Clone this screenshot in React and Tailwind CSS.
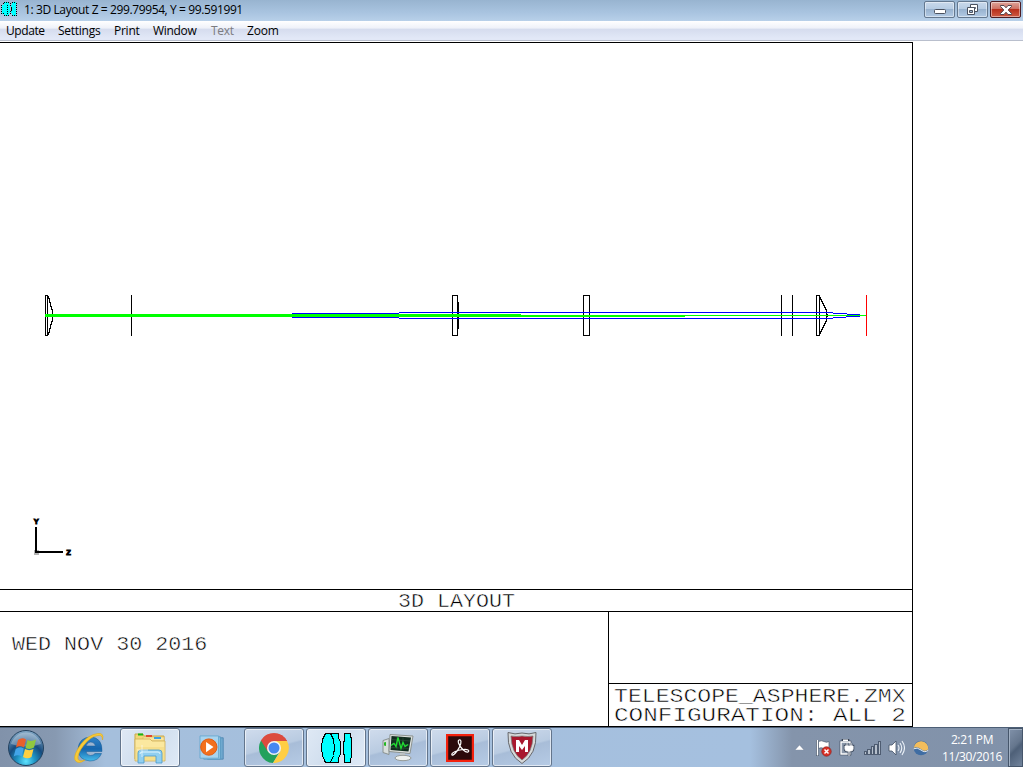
import React from "react";

const line = { fill: "none", stroke: "#000", strokeWidth: 1 };

function LensLogo({ className }) {
  return (
    <svg className={className} viewBox="0 0 32 32" preserveAspectRatio="none" shapeRendering="crispEdges">
      <g fill="#00ffff" stroke="#000" strokeWidth="1">
        <path d="M10.500 1.500h8v4l2 5v11l-2 5v4h-8z" />
        <path d="M5.500 1.500h5l3 6 1 8-1 8-3 7h-5l-3-7-1-8 1-8z" />
        <path d="M24.500 1.500h6l1 8v13l-1 8h-6v-6l-1-4v-9l1-4z" />
      </g>
    </svg>
  );
}

function SmallLensLogo() {
  return (
    <svg className="mt-[-2px] ml-[1px] h-4 w-4" viewBox="0 0 16 16" shapeRendering="crispEdges">
      <path fill="#00ffff" d="M3 1h5v3h1v8H8v3H3v-2H1V4h2zM11 1h4v14h-4v-3h-1V4h1z" />
      <path fill="none" stroke="#000" strokeDasharray="1 1" d="M3 1.500h6M.5 4v9M3 14.500h6M2.500 2v2M2.500 12v2M9.500 2v4M9.500 10v4M6.500 4v9M11 1.500h4M15.500 2v13M11 14.500h4" />
      <path fill="#000" d="M10 6h1v4h-1z" />
    </svg>
  );
}

function WindowButton({ children, close, label }) {
  return (
    <button
      aria-label={label}
      className={
        "flex h-[17px] w-[31px] items-center justify-center rounded-[2px] border shadow-[inset_0_0_0_1px_rgba(255,255,255,0.45)] " +
        (close
          ? "border-[#4d1c22] bg-[linear-gradient(#dfa59b_0%,#cf7264_45%,#b8301d_50%,#cf5a43_100%)]"
          : "border-[#64788f] bg-[linear-gradient(#c9d9eb_0%,#b7cce3_45%,#98b2cf_50%,#b2cae4_100%)]")
      }
    >
      {children}
    </button>
  );
}

function TitleBar() {
  return (
    <header className="flex h-[21px] items-start justify-between bg-[linear-gradient(#98b4d0,#a9c4e0_60%,#b8d0e9)]">
      <div className="flex items-center">
        <SmallLensLogo />
        <h1 className="ml-[7px] h-5 w-[222px] text-[12px] leading-5 tracking-[-0.39px] whitespace-nowrap text-black">
          1: 3D Layout Z = 299.79954, Y = 99.591991
        </h1>
      </div>
      <div className="mt-px mr-0.5 flex">
        <WindowButton label="Minimize">
          <svg className="mt-1 h-[5px] w-[12px]" viewBox="0 0 12 5"><rect x=".5" y=".5" width="11" height="4" rx="1" fill="#fff" stroke="#4b5260" /></svg>
        </WindowButton>
        <div className="w-[2px]" />
        <WindowButton label="Restore">
          <svg className="h-[12px] w-[13px]" viewBox="0 0 13 12" fill="#fff" stroke="#4b5260">
            <path d="M4.500 .5h7v7h-7z" /><path d="M7.500 3.500h2v1h-2z" />
            <path d="M1.500 3.500h7v7h-7z" /><path fill="#9fb6d0" d="M3.500 6.500h3v2h-3z" />
          </svg>
        </WindowButton>
        <div className="w-[2px]" />
        <WindowButton label="Close" close>
          <svg className="h-[10px] w-[12px]" viewBox="0 0 12 10">
            <path d="M.5 .5h3.500L6 2.800 8 .5h3.500v1L8.200 5l3.300 3.500v1H8L6 7.200 4 9.500H.5v-1L3.800 5 .5 1.500z" fill="#fff" stroke="#54464d" />
          </svg>
        </WindowButton>
      </div>
    </header>
  );
}

function MenuBar() {
  return (
    <nav className="flex h-[20px] border-b border-[#b9bfcd] bg-[linear-gradient(#ffffff_0%,#eef1f9_38%,#d5dcee_42%,#e2e8f7_90%)] text-[12px] leading-[20px] whitespace-nowrap">
      <span className="ml-[6px] w-[52px] tracking-[-0.42px]">Update</span>
      <span className="w-[56px] tracking-[-0.27px]">Settings</span>
      <span className="w-[39px] tracking-[-0.25px]">Print</span>
      <span className="w-[58px] tracking-[-0.3px]">Window</span>
      <span className="w-[36px] tracking-[-0.3px] text-[#7c7c80]">Text</span>
      <span className="tracking-[-0.2px]">Zoom</span>
    </nav>
  );
}

function OpticsDrawing() {
  return (
    <svg className="block h-[546px] w-[912px]" viewBox="0 43 912 546" shapeRendering="crispEdges">
      <g {...line}>
        <path d="M45.500 295.500h2v40h-2zM47.500 296.500h1v2h1v4h1v4h1v3h1v12h-1v3h-1v4h-1v4h-1v2h-1" />
        <path d="M131.500 295v41M452.500 295.500h5v40h-5zM458.500 302v27M583.500 295.500h6v40h-6z" />
        <path d="M781.500 295v41M792.500 295v41M816.500 295.500h3v40h-3z" />
        <path d="M819.500 297.500h1v2h1v2h1v2h1v2h1v2h1v2h1v12h-1v2h-1v2h-1v2h-1v2h-1v2h-1v2h-1" />
      </g>
      <path fill="#000" d="M827 314h1v3h-1z" />
      <g fill="#0000ff">
        <path d="M292 313h107v1H292zM292 317h107v1H292z" />
        <path d="M399 312h434v1H399zM399 318h434v1H399z" />
        <path d="M833 313h14v1h-14zM833 317h13v1h-13zM847 314h13v1h-13zM846 316h14v1h-14z" />
      </g>
      <path fill="#00ff00" d="M45 314h476v1h164v2H45z" />
      <path fill="#00ff00" d="M685 315h182v1H685z" />
      <path stroke="#ff0000" d="M866.500 295v41" />
      <path fill="#b4b4b4" d="M34 550h5v5h-5z" />
      <path fill="#000" d="M35 527h2v24h26v2H35z" />
      <text x="33.700" y="523.500" fontSize="7.500" fontWeight="700" fontFamily="Liberation Sans, sans-serif" stroke="#000" strokeWidth="1">Y</text>
      <text x="66.200" y="554.500" fontSize="7.500" fontWeight="700" fontFamily="Liberation Sans, sans-serif" stroke="#000" strokeWidth="1">Z</text>
    </svg>
  );
}

const plotter =
  "block origin-left whitespace-pre font-['Liberation_Mono',monospace] text-[20px] leading-[19px] [-webkit-text-stroke:0.5px_white]";

function Sheet() {
  return (
    <main className="mt-px flex h-[685px] w-[913px] flex-col border-y border-r border-black bg-white text-black">
      <OpticsDrawing />
      <div className="h-[23px] border-y border-black">
        <div className={plotter + " mt-[2px] ml-[398px] scale-x-[1.083]"}>3D LAYOUT</div>
      </div>
      <div className="flex flex-1">
        <div className="w-[608px] pt-[23px] pl-[12px]">
          <div className={plotter + " scale-x-[1.085]"}>WED NOV 30 2016</div>
        </div>
        <div className="flex flex-1 flex-col border-l border-black">
          <div className="h-[71px]" />
          <div className="flex-1 border-t border-black pt-[3px] pl-[5px]">
            <div className={plotter + " w-[252px] scale-x-[1.157]"}>TELESCOPE_ASPHERE.ZMX</div>
            <div className={plotter + " w-[240px] scale-x-[1.216]"}>CONFIGURATION: ALL 2</div>
          </div>
        </div>
      </div>
    </main>
  );
}

function StartOrb() {
  return (
    <svg className="h-[38px] w-[38px]" viewBox="0 0 38 38">
      <defs>
        <radialGradient id="orb" cx=".5" cy=".88" r=".85">
          <stop offset="0" stopColor="#5fe3ff" /><stop offset=".3" stopColor="#1f94c4" /><stop offset=".6" stopColor="#164b7e" /><stop offset="1" stopColor="#7fa5c4" />
        </radialGradient>
      </defs>
      <circle cx="19" cy="19" r="17.500" fill="url(#orb)" stroke="#24425f" />
      <path d="M4 15a15.500 15.500 0 0 1 30 0q-15 5-30 0z" fill="#fff" opacity=".3" />
      <path d="M11 11q4-3 8-.5l-2 8q-4-2.500-8 0z" fill="#e8602c" />
      <path d="M20.500 11q4 2 8.500-.5l-2 8q-4 2.500-8.500.5z" fill="#90c83f" />
      <path d="M8.700 20q4-3 8-.5l-2 8q-4-2.500-8 0z" fill="#42a4e8" />
      <path d="M18 20q4 2.300 8.500 0l-2 8q-4 2.500-8.500 0z" fill="#fdd043" />
    </svg>
  );
}

function ExplorerE() {
  return (
    <svg className="h-[32px] w-[32px]" viewBox="0 0 32 32">
      <defs><linearGradient id="ie" x2="0" y2="1"><stop stopColor="#3285ca" /><stop offset=".5" stopColor="#1665ad" /><stop offset="1" stopColor="#45bdec" /></linearGradient></defs>
      <path d="M29 19.500H13q.5 4 4.500 4 3 0 4.500-2h6.500q-3 7.500-11.500 7.500Q5 28 5 17 6 5.500 17.500 5 29.500 5.500 29 19.500zM13 14h9.500Q21.500 10 17.800 10T13 14z" fill="url(#ie)" stroke="#155994" strokeWidth=".5" />
      <path d="M29.500 8q2-7.500-5-6.500Q15 3 8 12 0 23 2 28q3 5 10 0-6 2-7-1-1-5 6-14T25 3.500q4.500-1 4.500 4.500z" fill="#f7ca38" stroke="#e3a916" strokeWidth=".6" />
    </svg>
  );
}

function Folders() {
  return (
    <svg className="h-[32px] w-[34px]" viewBox="0 0 34 32">
      <path d="M2 4V2h8l1 2h20v23H2z" fill="#f2d777" stroke="#c9a94c" />
      <path d="M5 1.500h5v2H5z" fill="#14b514" /><path d="M10 5h21v4H10z" fill="#f9e5a0" stroke="#d6b864" strokeWidth=".6" />
      <path d="M13 3h6v2h-6z" fill="#df4b32" /><path d="M21 5h7v2h-7z" fill="#3ba1e5" />
      <path d="M2 7h15l2 2h13v20H2z" fill="#fbe89f" stroke="#cfae55" strokeWidth=".8" />
      <path d="M3 15h28v13H3z" fill="#f3dc85" opacity=".7" />
      <path d="M5 31V21q0-3 3-3h18q3 0 3 3v10h-6v-7H11v7z" fill="#91cff0" stroke="#4a9bcb" strokeWidth=".8" />
      <path d="M7 22q0-2 2-2h16q2 0 2 2" fill="none" stroke="#dff5ff" />
      <path d="M9 13v12M4 18h11" stroke="#fff" strokeWidth="1" opacity=".6" />
    </svg>
  );
}

function MediaPlayer() {
  return (
    <svg className="h-[26px] w-[30px]" viewBox="0 0 30 28">
      <path d="M9 3h17v23H9z" fill="#6fa9cf" stroke="#5289b3" />
      <path d="M5 2h18v24H5z" fill="#91c5e4" stroke="#5b9ac2" />
      <path d="M1 1h20v24H1z" fill="#a9d4ee" stroke="#69a9d0" />
      <circle cx="10.500" cy="13" r="8.800" fill="#f2701d" stroke="#e0560b" />
      <path d="M7.500 7.500v11l8-5.500z" fill="#fff" />
    </svg>
  );
}

function ChromeIcon() {
  return (
    <svg className="h-[30px] w-[30px]" viewBox="0 0 30 30">
      <path d="M15 15L2 7.500A15 15 0 0 1 28 8z" fill="#dc4b3e" />
      <path d="M2 7.500A15 15 0 0 0 14 30l7-12-6-3z" fill="#23a15d" />
      <path d="M28 8a15 15 0 0 1-14 22l7.500-12L15 8z" fill="#ffce43" />
      <path d="M15 8h13a15 15 0 0 0-26-.5L8.500 18z" fill="#dc4b3e" />
      <circle cx="15" cy="15" r="7" fill="#f3f4f6" /><circle cx="15" cy="15" r="5.500" fill="#4688f1" />
    </svg>
  );
}

function MonitorIcon() {
  return (
    <svg className="h-[29px] w-[32px]" viewBox="0 0 32 28">
      <path d="M1 7l6-2v16l-6-2z" fill="#d8dedd" stroke="#8a9291" /><path d="M2 9l2-.5v4L2 12z" fill="#25b825" />
      <path d="M8 1l23 1.500L28 20 7 18z" fill="#dfe2df" stroke="#8c9390" />
      <path d="M9.500 2.500l19.500 1.500-2.500 14L8.500 16.500z" fill="#122c20" />
      <path d="M10 6l18 1.500M10 10l17 1.500M9 14l18 1M15 3v13M21 4v13" stroke="#3a6043" strokeWidth=".5" />
      <path d="M9 12l3-2 2 3 2-9 3 11 2-6 2 4 3-2" fill="none" stroke="#20de31" strokeWidth="1.300" />
      <path d="M18 19.500l5 .5v3h-5z" fill="#c4c8c6" /><ellipse cx="21" cy="24.500" rx="8" ry="2.700" fill="#edf0ee" stroke="#949a98" />
    </svg>
  );
}

function AcrobatIcon() {
  return (
    <svg className="h-[28px] w-[28px]" viewBox="0 0 28 28">
      <path d="M1 1h26v26H1z" fill="#2b0a0b" stroke="#f3220e" strokeWidth="2.400" />
      <path d="M13 6c2-1 3 2 .5 7C11 18 7 22 6 21c-1.500-2 5-5 11-5.500 5-.5 7 1 5 2.500-2 1-8-4-9.500-9-.5-2 0-3 .5-3z" fill="none" stroke="#fff" strokeWidth="1.200" />
    </svg>
  );
}

function ShieldIcon() {
  return (
    <svg className="h-[32px] w-[30px]" viewBox="0 0 30 32">
      <path d="M15 1q7 2 14-.5 1 22-14 31Q0 22.500 1 .5 8 3 15 1z" fill="#d6d9da" stroke="#65666b" />
      <path d="M15 4q6 1 11 0-.5 17-11 24Q4.500 21 4 4q5 1 11 0z" fill="#a9182e" stroke="#777" strokeWidth=".7" />
      <path d="M9 20V8h3l3 5 3-5h3v12h-3v-6l-3 4-3-4v6z" fill="#fff" />
    </svg>
  );
}

function TaskButton({ children, active }) {
  return (
    <button
      className={
        "mr-[2px] flex h-[39px] w-[60px] items-center justify-center rounded-[3px] border border-[#63758c] shadow-[inset_0_0_0_1px_rgba(255,255,255,0.6)] " +
        (active
          ? "bg-[linear-gradient(120deg,#dfe9f5,#cfdded_50%,#dfeaf7)]"
          : "bg-[linear-gradient(165deg,#d0dced_0%,#b9cbe1_48%,#a8bdd8_52%,#b6cbe5_100%)]")
      }
    >
      {children}
    </button>
  );
}

function Tray() {
  return (
    <div className="flex h-full items-center">
      <svg className="mr-[11px] h-[5px] w-[9px] shrink-0" viewBox="0 0 9 5"><path d="M0 5L4.500 0 9 5z" fill="#fff" stroke="#57677e" strokeWidth=".3" /></svg>
      <svg className="h-[18px] w-[18px] shrink-0" viewBox="0 0 18 18">
        <path d="M2.500 1v16" stroke="#47566b" strokeWidth="3" /><path d="M2.500 1v15.500" stroke="#fff" strokeWidth="1.500" /><path d="M3.500 2.500q3-1.500 5.500 0t5 0v7q-2 1.500-5 0t-5.500 0z" fill="#fff" stroke="#4d5b70" strokeWidth=".7" />
        <circle cx="11.500" cy="12.500" r="4.700" fill="#d93127" stroke="#8d201c" strokeWidth=".7" /><path d="M9.500 10.500l4 4m0-4l-4 4" stroke="#fff" strokeWidth="1.500" />
      </svg>
      <svg className="ml-[6px] h-[18px] w-[17px] shrink-0" viewBox="0 0 17 18" fill="none">
        <path d="M2 3h9v12H2zM4 1h5v2H4z" stroke="#374255" strokeWidth="2.600" /><path d="M2 3h9v12H2zM4 1.200h5" fill="#8b98aa" stroke="#fff" strokeWidth="1.400" />
        <path d="M6 7h8v3q0 2-2.500 2h-3Q6 12 6 10zM8 7V4m4 3V4m-2 8v5" fill="#fff" stroke="#414d60" strokeWidth="2.600" />
        <path d="M6 7h8v3q0 2-2.500 2h-3Q6 12 6 10zM8 7V4m4 3V4m-2 8v5" fill="#fff" stroke="#fff" strokeWidth="1" />
      </svg>
      <svg className="ml-[8px] h-[14px] w-[17px] shrink-0" viewBox="0 0 17 14" shapeRendering="crispEdges"><g fill="#b5bfcc" stroke="#4e5c71" strokeWidth="1"><path d="M.5 10.500h2v3h-2zM3.500 8.500h3v5h-3zM7.500 5.500h2v8h-2zM10.500 3.500h3v10h-3zM14.500.5h2v13h-2z" /></g></svg>
      <svg className="ml-[7px] h-[16px] w-[17px] shrink-0" viewBox="0 0 17 16" fill="none">
        <path d="M1 5h3l4-4v14l-4-4H1z" fill="#fff" stroke="#435166" strokeWidth=".8" /><path d="M10 5q2 3 0 6M12 3q3.500 5 0 10M14 1q5 7 0 14" stroke="#edf3f9" strokeWidth="1.100" />
      </svg>
      <svg className="ml-[8px] h-[16px] w-[16px] shrink-0" viewBox="0 0 16 16">
        <circle cx="8" cy="8" r="7.300" fill="#3f6da3" />
        <path d="M.7 8a7.300 7.300 0 0 1 14.600 1.200Q12 12.300 8.500 9.500 4 6 .7 8z" fill="#f3bd5c" />
        <path d="M.7 8.800Q4 6.800 8 10t7.200.3" fill="none" stroke="#e9edf1" strokeWidth="1" />
      </svg>
      <div className="ml-[9px] w-[68px] text-center text-[12px] leading-[17px] tracking-[-0.38px] text-white">
        <div>2:21 PM</div>
        <div>11/30/2016</div>
      </div>
      <div className="ml-[2px] h-[39px] w-[15px] shrink-0 border border-[#46566b] bg-[linear-gradient(135deg,#8192aa,#65768d_45%,#4e6078_55%,#72849c)] shadow-[inset_1px_1px_0_#a2b1c4]" />
    </div>
  );
}

function Taskbar() {
  return (
    <footer className="flex h-[40px] w-[1023px] justify-between border-t border-[#4d5f76] bg-[linear-gradient(90deg,#8192aa_0px,#8799b1_55px,#a5bfdc_105px,#a5c0df_750px,#8494ab_792px,#8192aa_1023px)]">
      <div className="flex h-full items-center">
        <div className="flex w-[58px] justify-center pr-[6px]"><StartOrb /></div>
        <div className="flex w-[62px] justify-center"><ExplorerE /></div>
        <TaskButton active><Folders /></TaskButton>
        <div className="flex w-[62px] justify-center"><MediaPlayer /></div>
        <TaskButton><ChromeIcon /></TaskButton>
        <TaskButton active><LensLogo className="h-8 w-8" /></TaskButton>
        <TaskButton><MonitorIcon /></TaskButton>
        <TaskButton><AcrobatIcon /></TaskButton>
        <TaskButton><ShieldIcon /></TaskButton>
      </div>
      <Tray />
    </footer>
  );
}

export default function App() {
  return (
    <div className="flex h-[768px] w-[1024px] flex-col overflow-hidden bg-white font-['Open_Sans','Noto_Sans',sans-serif]">
      <div className="w-[1023px]">
        <TitleBar />
        <MenuBar />
      </div>
      <Sheet />
      <Taskbar />
    </div>
  );
}
